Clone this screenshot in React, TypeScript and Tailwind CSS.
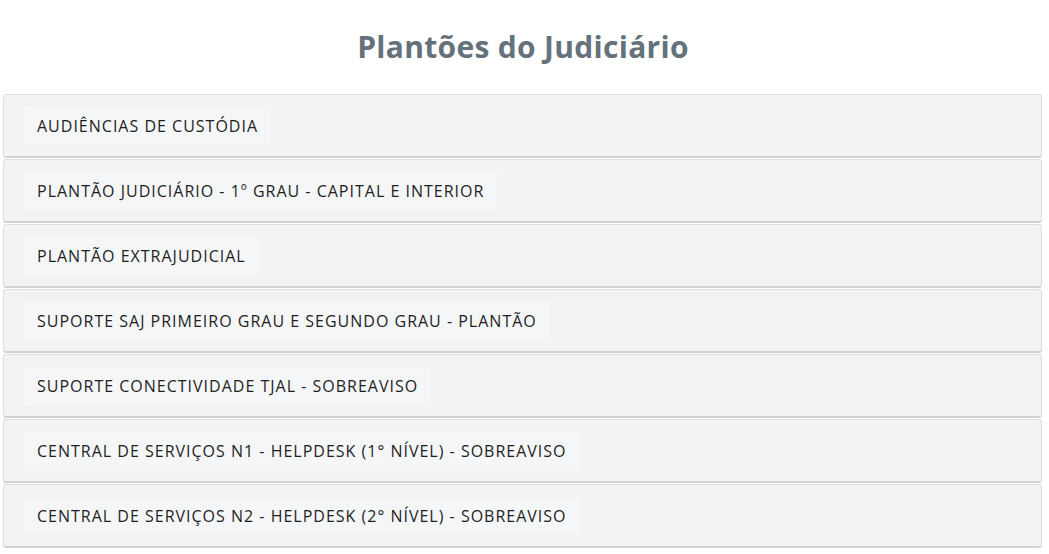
import React from 'react';

const plantoes = [
  'AUDIÊNCIAS DE CUSTÓDIA',
  'PLANTÃO JUDICIÁRIO - 1º GRAU - CAPITAL E INTERIOR',
  'PLANTÃO EXTRAJUDICIAL',
  'SUPORTE SAJ PRIMEIRO GRAU E SEGUNDO GRAU - PLANTÃO',
  'SUPORTE CONECTIVIDADE TJAL - SOBREAVISO',
  'CENTRAL DE SERVIÇOS N1 - HELPDESK (1° NÍVEL) - SOBREAVISO',
  'CENTRAL DE SERVIÇOS N2 - HELPDESK (2° NÍVEL) - SOBREAVISO',
];

export default function App() {
  return (
    <div className="min-h-screen bg-white font-['Open_Sans','Noto_Sans',sans-serif]">
      {/* cabeçalho */}
      <div className="h-[94px] flex items-center justify-center pb-[2px]">
        <h1 className="text-[30px] font-bold text-[#65727c] tracking-[0.3px] pr-[3px]">
          Plantões do Judiciário
        </h1>
      </div>

      <div className="ml-[3px] mr-[7px] flex flex-col gap-[1px]">
        {plantoes.map((item, index) => (
          <div
            key={index}
            className="h-[64px] bg-[#f3f3f3] border border-[#dedede] border-b-2 border-b-[#d2d2d2] rounded-[3px] flex items-center px-[20px]"
          >
            <span className="h-[38px] flex items-center px-[13px] bg-[#f5f6f7] rounded-[3px] text-[16px] tracking-[1px] text-[#1e1e1e]">
              {item}
            </span>
          </div>
        ))}
      </div>
    </div>
  );
}
